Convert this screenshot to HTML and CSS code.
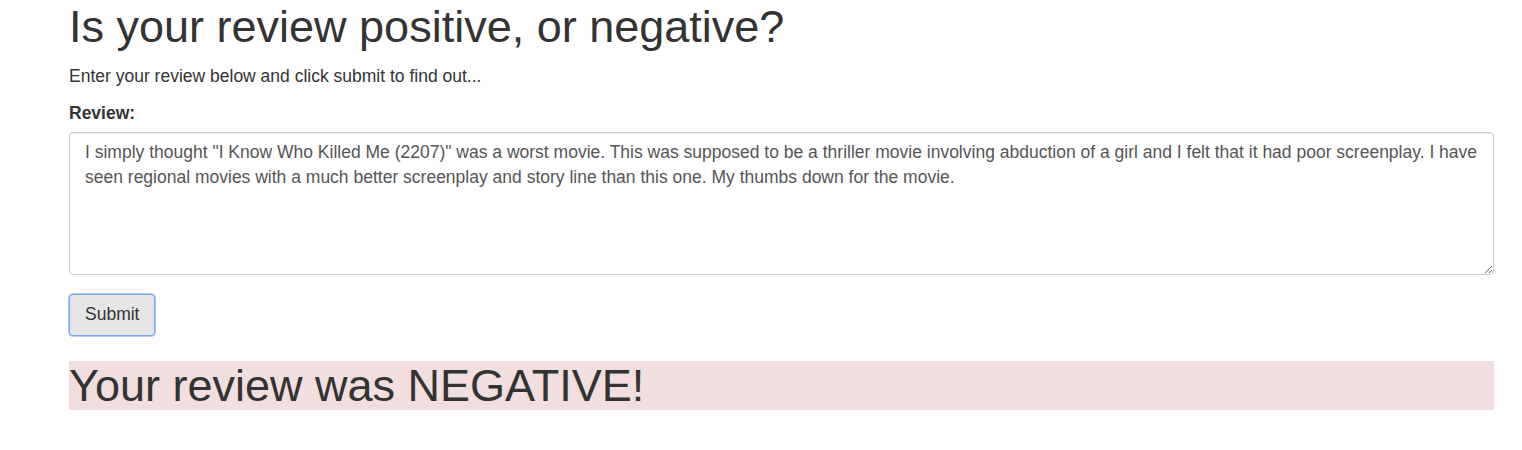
FILE: index.html
```html
<!DOCTYPE html>
<html>
<head>
<meta charset="utf-8">
<link rel="stylesheet" href="styles.css">
</head>
<body>
<div class="container">
  <h1 class="title">Is your review positive, or negative?</h1>
  <p class="lead-text">Enter your review below and click submit to find out...</p>
  <form class="review-form">
    <label class="field-label" for="review">Review:</label>
    <textarea id="review" class="review-box">I simply thought "I Know Who Killed Me (2207)" was a worst movie. This was supposed to be a thriller movie involving abduction of a girl and I felt that it had poor screenplay. I have seen regional movies with a much better screenplay and story line than this one. My thumbs down for the movie.</textarea>
    <div class="actions"><button type="button" class="btn-submit">Submit</button></div>
  </form>
  <h1 class="result">Your review was NEGATIVE!</h1>
</div>
</body>
</html>
```

FILE: styles.css
```css
* { box-sizing: border-box; }
html, body { margin: 0; padding: 0; background: #fff; }
body {
  font-family: "Liberation Sans", Arial, sans-serif;
  font-size: 17.5px;
  line-height: 25px;
  color: #333;
}
.container {
  padding: 0 28px 0 69px;
}
.title {
  font-size: 45px;
  font-weight: 500;
  line-height: 49.5px;
  margin: 2px 0 12px 0;
}
.lead-text {
  margin: 0 0 12px 0;
}
.review-form {
  display: flex;
  flex-direction: column;
  align-items: flex-start;
}
.field-label {
  font-weight: bold;
  margin-bottom: 6px;
}
.review-box {
  display: block;
  width: 100%;
  height: 143px;
  padding: 7px 15px;
  font-family: inherit;
  font-size: 17.5px;
  line-height: 25px;
  color: #555;
  border: 1px solid #ccc;
  border-radius: 4px;
  box-shadow: inset 0 1px 1px rgba(0,0,0,.075);
  resize: vertical;
}
.actions {
  margin-top: 19px;
}
.btn-submit {
  display: block;
  font-family: inherit;
  font-size: 17.5px;
  line-height: 25px;
  color: #333;
  background: #e6e6e6;
  border: 1px solid #7ea6ec;
  border-radius: 4px;
  padding: 7.5px 15px;
  box-shadow: 0 0 0 1px rgba(110,160,240,.55);
}
.result {
  margin: 25px 0 0 0;
  background: #f2dede;
  font-size: 45px;
  font-weight: 500;
  line-height: 49px;
}
```
